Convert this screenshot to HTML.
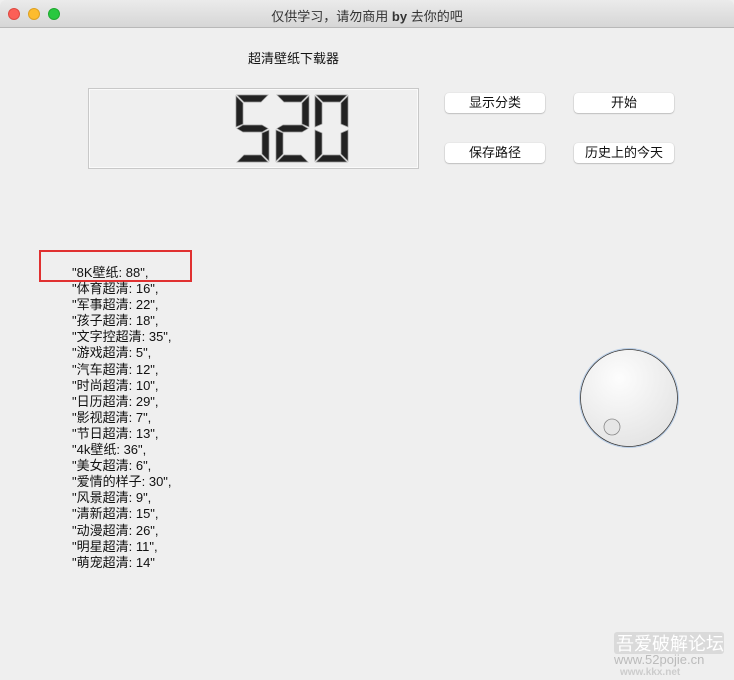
<!DOCTYPE html>
<html><head><meta charset="utf-8"><style>
*{margin:0;padding:0;box-sizing:border-box}
body{width:734px;height:680px;background:#efefef;font-family:"Liberation Sans","Noto Sans CJK SC",sans-serif;position:relative;overflow:hidden;color:#111}
.tb{position:absolute;left:0;top:0;width:734px;height:28px;background:linear-gradient(#ebebeb,#d6d6d6);border-bottom:1px solid #b8b8b8;border-radius:6px 6px 0 0}
.tb .t{position:absolute;left:0;right:0;top:6px;text-align:center;font-size:13px;color:#333}
.dot{position:absolute;top:8px;width:12px;height:12px;border-radius:50%}
.btn{position:absolute;width:100px;height:20px;background:#fff;border-radius:4px;box-shadow:0 0.5px 1.5px rgba(0,0,0,.35);font-size:13px;text-align:center;line-height:20px}
.list{position:absolute;left:72px;top:265px;font-size:13px;line-height:16.1px;white-space:pre}
</style></head><body>
<div class="tb"><div class="dot" style="left:8px;background:#fc5f57;border:0.5px solid #de4a42"></div><div class="dot" style="left:28px;background:#fdbc2e;border:0.5px solid #dea123"></div><div class="dot" style="left:48px;background:#28c840;border:0.5px solid #1fa92f"></div><div class="t">仅供学习，请勿商用 <b>by</b> 去你的吧</div></div>
<div style="position:absolute;left:248px;top:48px;font-size:13px">超清壁纸下载器</div>
<div style="position:absolute;left:88px;top:88px;width:331px;height:81px;border:1px solid #c8c8c8;box-shadow:inset 0 0 0 1px #fafafa"></div>
<svg style="position:absolute;left:0;top:0" width="734" height="680">
<defs>
<g id="a"><polygon points="1,0 32,0 25,7 8,7"/></g>
<g id="b"><polygon points="33,1 33,32 26,29 26,8"/></g>
<g id="c"><polygon points="33,35 33,66 26,59 26,38"/></g>
<g id="d"><polygon points="8,60 25,60 32,67 1,67"/></g>
<g id="e"><polygon points="0,35 7,38 7,59 0,66"/></g>
<g id="f"><polygon points="0,1 7,8 7,29 0,32"/></g>
<g id="g"><polygon points="1,33.5 7,30 26,30 32,33.5 26,37 7,37"/></g>
</defs>
<g fill="#222" stroke="#999" stroke-width="0.7">
<g transform="translate(236,95)"><use href="#a"/><use href="#f"/><use href="#g"/><use href="#c"/><use href="#d"/></g>
<g transform="translate(276,95)"><use href="#a"/><use href="#b"/><use href="#g"/><use href="#e"/><use href="#d"/></g>
<g transform="translate(315,95)"><use href="#a"/><use href="#b"/><use href="#c"/><use href="#d"/><use href="#e"/><use href="#f"/></g>
</g>
<defs><radialGradient id="k" cx="0.4" cy="0.3" r="0.8"><stop offset="0" stop-color="#fdfdfd"/><stop offset="1" stop-color="#e2e2e2"/></radialGradient></defs>
<circle cx="629" cy="398" r="48.5" fill="url(#k)" stroke="#333" stroke-width="0.8"/>
<circle cx="629" cy="398" r="49.5" fill="none" stroke="#b8cde6" stroke-width="1"/>
<circle cx="612" cy="427" r="8" fill="#e6e6e6" stroke="#888" stroke-width="0.8"/>
<rect x="40" y="251" width="151" height="30" fill="none" stroke="#e03030" stroke-width="2"/>
</svg>
<div class="btn" style="left:445px;top:93px">显示分类</div>
<div class="btn" style="left:574px;top:93px">开始</div>
<div class="btn" style="left:445px;top:143px">保存路径</div>
<div class="btn" style="left:574px;top:143px">历史上的今天</div>
<div class="list">"8K壁纸: 88",
"体育超清: 16",
"军事超清: 22",
"孩子超清: 18",
"文字控超清: 35",
"游戏超清: 5",
"汽车超清: 12",
"时尚超清: 10",
"日历超清: 29",
"影视超清: 7",
"节日超清: 13",
"4k壁纸: 36",
"美女超清: 6",
"爱情的样子: 30",
"风景超清: 9",
"清新超清: 15",
"动漫超清: 26",
"明星超清: 11",
"萌宠超清: 14"</div>
<div style="position:absolute;left:614px;top:632px;width:110px;height:22px;background:#ccc;opacity:.6;border-radius:3px"></div>
<div style="position:absolute;left:616px;top:630px;font-size:18px;color:#fff;letter-spacing:0px">吾爱破解论坛</div>
<div style="position:absolute;left:614px;top:652px;font-size:13px;color:#bbb">www.52pojie.cn</div>
<div style="position:absolute;left:620px;top:667px;font-size:10px;color:#ccc;font-weight:bold">www.kkx.net</div>
</body></html>
